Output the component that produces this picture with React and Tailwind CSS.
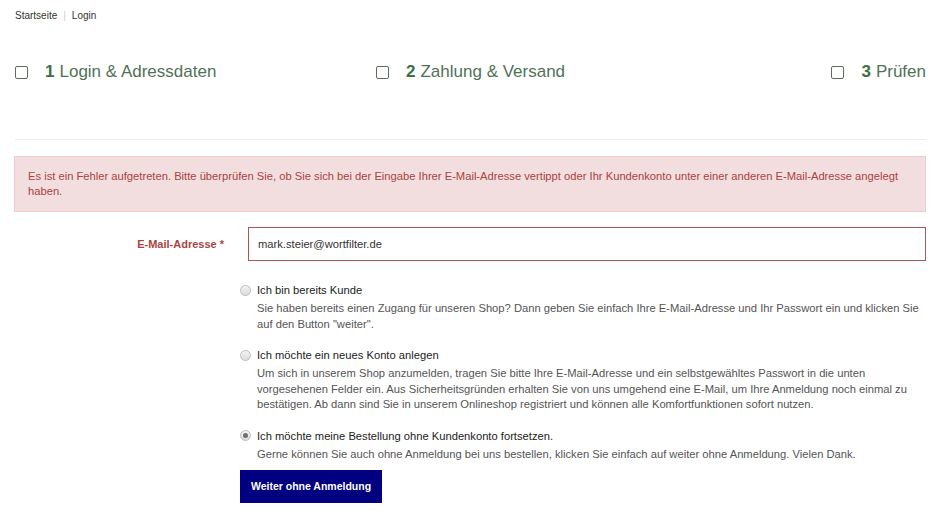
import React from 'react'

const steps = [
  { n: 1, label: 'Login & Adressdaten', cls: 'w-[361px]' },
  { n: 2, label: 'Zahlung & Versand', cls: '' },
  { n: 3, label: 'Prüfen', cls: 'ml-auto' },
]

const options = [
  {
    title: 'Ich bin bereits Kunde',
    text: 'Sie haben bereits einen Zugang für unseren Shop? Dann geben Sie einfach Ihre E-Mail-Adresse und Ihr Passwort ein und klicken Sie auf den Button "weiter".',
  },
  {
    title: 'Ich möchte ein neues Konto anlegen',
    text: 'Um sich in unserem Shop anzumelden, tragen Sie bitte Ihre E-Mail-Adresse und ein selbstgewähltes Passwort in die unten vorgesehenen Felder ein. Aus Sicherheitsgründen erhalten Sie von uns umgehend eine E-Mail, um Ihre Anmeldung noch einmal zu bestätigen. Ab dann sind Sie in unserem Onlineshop registriert und können alle Komfortfunktionen sofort nutzen.',
  },
  {
    title: 'Ich möchte meine Bestellung ohne Kundenkonto fortsetzen.',
    text: 'Gerne können Sie auch ohne Anmeldung bei uns bestellen, klicken Sie einfach auf weiter ohne Anmeldung. Vielen Dank.',
    checked: true,
  },
]

// Radio circle like the old browser default
function Radio({ checked }) {
  return (
    <span className="mr-[6px] flex h-[11px] w-[11px] shrink-0 items-center justify-center rounded-full border border-[#bdbdbd] bg-gradient-to-b from-[#f4f4f4] to-[#dcdcdc]">
      {checked && <span className="h-[5px] w-[5px] rounded-full bg-[#6f6f6f]"></span>}
    </span>
  )
}

export default function App() {
  return (
    <div className="min-h-[527px] bg-white pl-[15px] pr-[16px] font-['Liberation_Sans',Arial,sans-serif] text-[#333]">
      {/* Breadcrumb */}
      <div className="flex items-center pt-[10px] text-[10px] leading-[12px] text-[#333]">
        <span>Startseite</span>
        <span className="mx-[6px] text-[#ccc]">|</span>
        <span>Login</span>
      </div>

      {/* Checkout steps */}
      <div className="mt-[38px] flex items-center text-[17px] leading-[24px]">
        {steps.map((s) => (
          <div key={s.n} className={`flex items-center ${s.cls}`}>
            <span className="mr-[17px] h-[13px] w-[13px] rounded-[2px] border-[1.5px] border-[#5b6e5e]"></span>
            <span className="font-bold text-[#3c6e44]">{s.n}</span>
            <span className="ml-[5px] text-[#4f7257]">{s.label}</span>
          </div>
        ))}
      </div>

      <div className="mt-[55px] border-t border-[#eeeeee]"></div>

      {/* Error */}
      <div className="-ml-px mt-[16px] border border-[#ebccd1] bg-[#f2dede] px-[13px] py-[12px] text-[11.2px] leading-[15px] text-[#a94442]">
        Es ist ein Fehler aufgetreten. Bitte überprüfen Sie, ob Sie sich bei der Eingabe Ihrer E-Mail-Adresse vertippt oder Ihr Kundenkonto unter einer anderen E-Mail-Adresse angelegt haben.
      </div>

      {/* Email */}
      <div className="mt-[15px] flex items-center">
        <label className="w-[233px] shrink-0 pr-[24px] text-right text-[11px] font-bold text-[#a94442]">
          E-Mail-Adresse *
        </label>
        <input
          readOnly
          value="mark.steier@wortfilter.de"
          className="h-[34px] flex-1 border border-[#a8585b] bg-white pl-[9px] text-[11.2px] text-[#333] outline-none"
        />
      </div>

      {/* Options */}
      <div className="ml-[225px] mt-[21px]">
        {options.map((o, i) => (
          <div key={i} className={i > 0 ? 'mt-[15px]' : ''}>
            <div className="flex items-center text-[11.2px] leading-[16px] text-[#222]">
              <Radio checked={o.checked} />
              <span>{o.title}</span>
            </div>
            <p className="mt-[3px] pl-[17px] text-[11.2px] leading-[15.5px] text-[#555]">{o.text}</p>
          </div>
        ))}
        <button className="mt-[8px] h-[33px] w-[142px] bg-[#000080] text-center text-[10.5px] font-bold text-white">
          Weiter ohne Anmeldung
        </button>
      </div>
    </div>
  )
}
